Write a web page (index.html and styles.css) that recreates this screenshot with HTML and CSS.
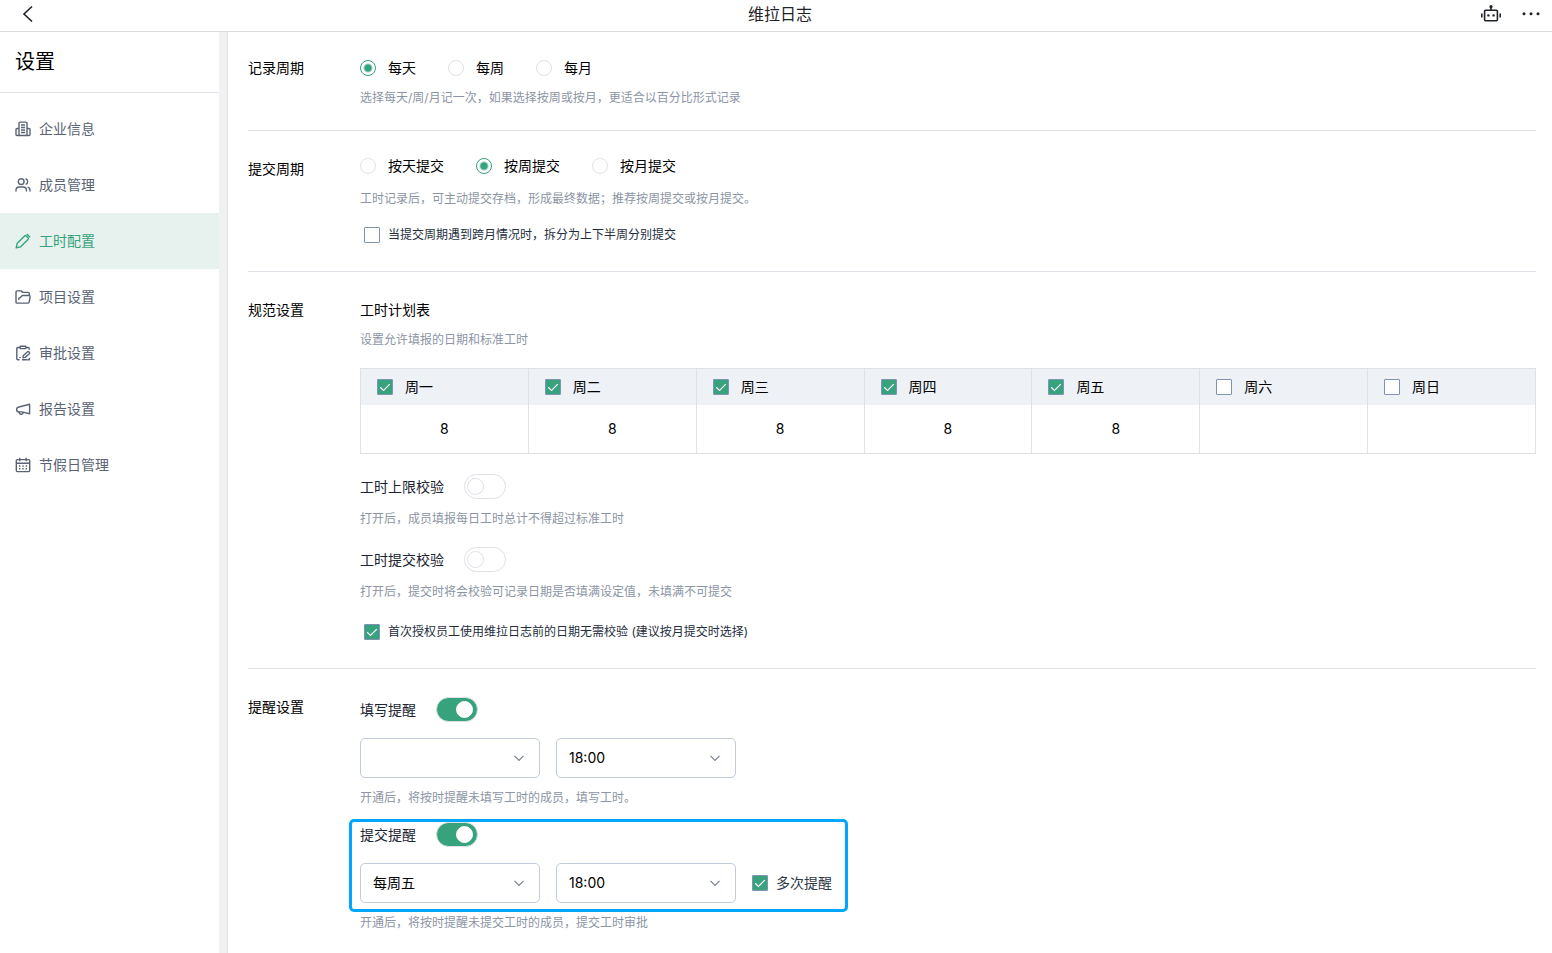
FILE: index.html
```html
<!DOCTYPE html>
<html lang="zh-CN">
<head>
    <meta charset="UTF-8">
    <meta name="viewport" content="width=device-width, initial-scale=1.0">
    <title>维拉日志</title>
    <link rel="stylesheet" href="styles.css">
</head>
<body>
    <header class="topbar">
        <button type="button" class="icon-button" aria-label="返回">
            <svg width="16" height="18" viewBox="0 0 16 18" fill="none" stroke="currentColor" stroke-width="1.6"><path d="M12 1.5 4 9l8 7.5"/></svg>
        </button>
        <h1>维拉日志</h1>
        <div class="topbar-actions">
            <button type="button" class="icon-button" aria-label="机器人">
                <svg width="22" height="18" viewBox="0 0 22 18" fill="none" stroke="currentColor" stroke-width="1.6">
                    <rect x="4.6" y="5.2" width="12.8" height="10.6" rx="1"/>
                    <path d="M11 2v3M1.8 8.5v4M20.2 8.5v4"/>
                    <circle cx="11" cy="1.7" r="1.6" fill="currentColor" stroke="none"/>
                    <circle cx="8.4" cy="10.4" r="1.2" fill="currentColor" stroke="none"/>
                    <circle cx="13.6" cy="10.4" r="1.2" fill="currentColor" stroke="none"/>
                </svg>
            </button>
            <button type="button" class="icon-button" aria-label="更多">
                <svg width="18" height="18" viewBox="0 0 18 18" fill="currentColor"><circle cx="2" cy="8.8" r="1.5"/><circle cx="9" cy="8.8" r="1.5"/><circle cx="16" cy="8.8" r="1.5"/></svg>
            </button>
        </div>
    </header>

    <div class="layout">
        <aside class="sidebar">
            <h2>设置</h2>
            <nav>
                <a href="#company">
                    <svg class="icon" viewBox="0 0 16 16"><path d="M4 14.5V2.1c0-.6.4-1 1-1h6c.6 0 1 .4 1 1v12.4M4 7.5H2c-.6 0-1 .4-1 1v5c0 .6.4 1 1 1h12c.6 0 1-.4 1-1v-5c0-.6-.4-1-1-1h-2M6 4h4M6 6.5h4M6 9h4M6 11.5h4"/></svg>
                    企业信息
                </a>
                <a href="#members">
                    <svg class="icon" viewBox="0 0 16 16"><circle cx="6.2" cy="4.6" r="2.9"/><path d="M1 14.6v-1.4c0-2 1.4-3.2 3.2-3.2h4c1.8 0 3.2 1.2 3.2 3.2v1.4M10.6 1.8c1.2.3 2.1 1.4 2.1 2.8s-.9 2.5-2.1 2.8M12.6 10.2c1.4.4 2.4 1.5 2.4 3v1.4"/></svg>
                    成员管理
                </a>
                <a href="#hours" class="active">
                    <svg class="icon" viewBox="0 0 16 16"><path d="M1.2 14.8l.9-4.2L9.6 3c.5-.5 1.1-.5 1.6 0l1.8 1.8c.5.5.5 1.1 0 1.6l-7.6 7.5zM11.8.9l3.3 3.3"/></svg>
                    工时配置
                </a>
                <a href="#projects">
                    <svg class="icon" viewBox="0 0 16 16"><path d="M14.2 6V4.4c0-.6-.4-1-1-1H7.8L6 1.9H2c-.6 0-1 .4-1 1v10.3c0 .5.4.9 1 .9h11.1c.6 0 1-.3 1.1-.9l.9-5.4c.1-.8-.3-1.3-1-1.3H7.3L5 8.7c-.6 0-1 .2-1.1.8l-.3 1.3"/></svg>
                    项目设置
                </a>
                <a href="#approval">
                    <svg class="icon" viewBox="0 0 16 16"><path d="M5 2.5H2.8c-.6 0-1 .4-1 1v10.2c0 .6.4 1 1 1h1.8M11 2.5h2.2c.6 0 1 .4 1 1v1.2M5.2 1.2h5.6v2.4H5.2zM8 12.7l.4-2.2 4.1-3.7c.4-.4.9-.4 1.3 0l.6.7c.4.4.3.9-.1 1.3l-4.1 3.6zM7 14.7h5.8M13 14.7h1.4v-2M5 12v1"/></svg>
                    审批设置
                </a>
                <a href="#reports">
                    <svg class="icon" viewBox="0 0 16 16"><path d="M14.6 3.2v9.6L7 10.9H4.4C2.6 10.9 1.6 9.8 1.6 8.4c0-1.2.9-2.1 2.4-2.4zM4 11c.2 1.5 1 2.3 2.2 2.3S8.2 12.5 8 11.2"/></svg>
                    报告设置
                </a>
                <a href="#holidays">
                    <svg class="icon" viewBox="0 0 16 16"><rect x="1.3" y="2.6" width="13.4" height="12" rx="1"/><path d="M1.3 6.2h13.4M4.8.8v3.4M11.2.8v3.4"/><path d="M4 9h1.4M7.3 9h1.4M10.6 9H12M4 11.8h1.4M7.3 11.8h1.4M10.6 11.8H12"/></svg>
                    节假日管理
                </a>
            </nav>
        </aside>

        <main class="content">
            <section class="setting setting-record">
                <h3>记录周期</h3>
                <div class="setting-body">
                    <div class="radio-group">
                        <label><input type="radio" name="record" checked>每天</label>
                        <label><input type="radio" name="record">每周</label>
                        <label><input type="radio" name="record">每月</label>
                    </div>
                    <p class="hint">选择每天/周/月记一次，如果选择按周或按月，更适合以百分比形式记录</p>
                </div>
            </section>

            <section class="setting setting-submit">
                <h3>提交周期</h3>
                <div class="setting-body">
                    <div class="radio-group">
                        <label><input type="radio" name="submit">按天提交</label>
                        <label><input type="radio" name="submit" checked>按周提交</label>
                        <label><input type="radio" name="submit">按月提交</label>
                    </div>
                    <p class="hint">工时记录后，可主动提交存档，形成最终数据；推荐按周提交或按月提交。</p>
                    <label class="check-row"><input type="checkbox">当提交周期遇到跨月情况时，拆分为上下半周分别提交</label>
                </div>
            </section>

            <section class="setting setting-rules">
                <h3>规范设置</h3>
                <div class="setting-body">
                    <h4>工时计划表</h4>
                    <p class="hint">设置允许填报的日期和标准工时</p>
                    <table class="plan">
                        <thead>
                            <tr>
                                <th><label><input type="checkbox" checked>周一</label></th>
                                <th><label><input type="checkbox" checked>周二</label></th>
                                <th><label><input type="checkbox" checked>周三</label></th>
                                <th><label><input type="checkbox" checked>周四</label></th>
                                <th><label><input type="checkbox" checked>周五</label></th>
                                <th><label><input type="checkbox">周六</label></th>
                                <th><label><input type="checkbox">周日</label></th>
                            </tr>
                        </thead>
                        <tbody>
                            <tr>
                                <td>8</td>
                                <td>8</td>
                                <td>8</td>
                                <td>8</td>
                                <td>8</td>
                                <td></td>
                                <td></td>
                            </tr>
                        </tbody>
                    </table>
                    <label class="switch-row">工时上限校验<input type="checkbox" class="switch"></label>
                    <p class="hint">打开后，成员填报每日工时总计不得超过标准工时</p>
                    <label class="switch-row">工时提交校验<input type="checkbox" class="switch"></label>
                    <p class="hint">打开后，提交时将会校验可记录日期是否填满设定值，未填满不可提交</p>
                    <label class="check-row"><input type="checkbox" checked>首次授权员工使用维拉日志前的日期无需校验 (建议按月提交时选择)</label>
                </div>
            </section>

            <section class="setting setting-remind">
                <h3>提醒设置</h3>
                <div class="setting-body">
                    <div class="reminder">
                        <label class="switch-row">填写提醒<input type="checkbox" class="switch" checked></label>
                        <div class="fields">
                            <select aria-label="填写提醒日期"><option></option><option>每天</option></select>
                            <select aria-label="填写提醒时间"><option>18:00</option></select>
                        </div>
                    </div>
                    <p class="hint">开通后，将按时提醒未填写工时的成员，填写工时。</p>
                    <div class="reminder highlighted">
                        <label class="switch-row">提交提醒<input type="checkbox" class="switch" checked></label>
                        <div class="fields">
                            <select aria-label="提交提醒日期"><option>每周五</option></select>
                            <select aria-label="提交提醒时间"><option>18:00</option></select>
                            <label class="repeat"><input type="checkbox" checked>多次提醒</label>
                        </div>
                    </div>
                    <p class="hint">开通后，将按时提醒未提交工时的成员，提交工时审批</p>
                </div>
            </section>
        </main>
    </div>
</body>
</html>
```
FILE: styles.css
```css
*,
*::before,
*::after {
    box-sizing: border-box;
}
body {
    margin: 0;
    min-height: 100vh;
    display: flex;
    flex-direction: column;
    font-family: Inter, "Noto Sans CJK SC", sans-serif;
    font-size: 14px;
    line-height: 20px;
    color: #000;
    background: #fff;
}
h1, h2, h3, h4, p {
    margin: 0;
    font-weight: 400;
}

/* top bar */
.topbar {
    display: grid;
    grid-template-columns: 1fr auto 1fr;
    align-items: center;
    height: 32px;
    padding: 0 12px 4px 20px;
    border-bottom: 1px solid #d8dadd;
    color: #1f2329;
}
.topbar h1 {
    font-size: 16px;
}
.icon-button {
    display: flex;
    padding: 0;
    border: none;
    background: none;
    color: inherit;
    cursor: pointer;
}
.topbar-actions {
    display: flex;
    justify-content: flex-end;
    gap: 20px;
}

/* sidebar */
.layout {
    display: flex;
    flex: 1;
}
.sidebar {
    flex: none;
    width: 219px;
}
.sidebar h2 {
    padding: 15px;
    font-size: 20px;
    line-height: 30px;
    border-bottom: 1px solid #dfe1e6;
}
.sidebar nav {
    padding-top: 8px;
}
.sidebar a {
    display: flex;
    align-items: center;
    gap: 8px;
    height: 56px;
    padding: 0 15px;
    color: #596375;
    text-decoration: none;
}
.sidebar a.active {
    color: #36a37c;
    background: #e7f1ee;
}
.icon {
    width: 16px;
    height: 16px;
    fill: none;
    stroke: currentColor;
    stroke-width: 1.4;
    stroke-linejoin: round;
}

/* content */
.content {
    flex: 1;
    min-width: 0;
    padding: 0 16px 0 20px;
    border-left: 1px solid #dfe1e6;
    box-shadow: -8px 0 0 #f0f1f3;
    margin-left: 8px;
}
.setting {
    display: flex;
    padding: 24px 0 26px;
    border-bottom: 1px solid #dfe1e6;
}
.setting:last-child {
    border-bottom: none;
    padding-bottom: 20px;
}
.setting h3 {
    flex: none;
    width: 112px;
    padding-top: 4px;
    font-size: 14px;
}
.setting-body {
    flex: 1;
    min-width: 0;
}
.setting-body h4 {
    font-size: 14px;
    line-height: 28px;
}
.hint {
    margin-top: 10px;
    font-size: 12px;
    color: #8c95a5;
}
.setting-record {
    padding: 22px 0;
}
.setting-record .radio-group {
    height: 28px;
}
.setting-record .hint,
h4 + .hint {
    margin-top: 6px;
}
.setting-submit .hint {
    margin-top: 12px;
}

/* form controls */
.radio-group {
    display: flex;
    gap: 32px;
    height: 22px;
}
.radio-group label {
    display: flex;
    align-items: center;
    gap: 12px;
}
input[type="radio"],
input[type="checkbox"] {
    appearance: none;
    flex: none;
    width: 16px;
    height: 16px;
    margin: 0;
    background: #fff center / 100% no-repeat;
}
input[type="radio"] {
    border: 1px solid #dfe1e6;
    border-radius: 50%;
}
input[type="radio"]:checked {
    border-color: #36a37c;
    background: radial-gradient(circle, #36a37c 3px, #fff 5px);
}
input[type="checkbox"] {
    border: 1px solid #8093b3;
    border-radius: 1px;
}
input[type="checkbox"]:checked {
    background-color: #36a37c;
    background-image: url("data:image/svg+xml,%3Csvg xmlns='http://www.w3.org/2000/svg' viewBox='0 0 14 14' fill='none' stroke='white' stroke-width='1.2'%3E%3Cpath d='M2.2 7.2l3.3 3.2 6.3-6.3'/%3E%3C/svg%3E");
}
.check-row {
    display: flex;
    align-items: center;
    gap: 8px;
    width: fit-content;
    margin-top: 16px;
    padding-left: 4px;
    font-size: 12px;
    color: #242d3d;
}
.setting-rules .check-row {
    margin-top: 20px;
}
.switch-row {
    display: flex;
    align-items: center;
    gap: 20px;
    width: fit-content;
    height: 25px;
    color: #1b2433;
}
.setting-rules .switch-row {
    margin-top: 18px;
}
.setting-rules .plan + .switch-row {
    margin-top: 20px;
}
input[type="checkbox"].switch {
    display: flex;
    align-items: center;
    width: 42px;
    height: 25px;
    padding: 0 2px;
    border: 1px solid #dfe1e6;
    border-radius: 13px;
    background: #fff;
}
.switch::before {
    content: "";
    width: 17px;
    height: 17px;
    border: 1px solid #dfe1e6;
    border-radius: 50%;
    background: #fff;
}
input[type="checkbox"].switch:checked {
    justify-content: flex-end;
    padding-right: 4px;
    background: #36a37c;
}
.switch:checked::before {
    border-color: #fff;
}

/* weekly plan */
.plan {
    width: 100%;
    margin-top: 18px;
    table-layout: fixed;
    border-spacing: 0;
    border: 1px solid #dfe1e6;
    border-left: none;
}
.plan th,
.plan td {
    border-left: 1px solid #dfe1e6;
    font-weight: 400;
}
.plan th {
    height: 36px;
    padding: 0 16px;
    background: #eef1f6;
}
.plan td {
    height: 48px;
    padding: 0;
    text-align: center;
}
.plan label {
    display: flex;
    align-items: center;
    gap: 12px;
}

/* reminders */
.setting-remind .reminder:first-child {
    margin-top: 4px;
}
.reminder {
    width: fit-content;
    margin-top: 14px;
}
.fields {
    display: flex;
    align-items: center;
    gap: 16px;
    margin-top: 16px;
}
select {
    appearance: none;
    width: 180px;
    height: 40px;
    padding: 0 32px 0 12px;
    border: 1px solid #c0ccda;
    border-radius: 5px;
    font: inherit;
    color: #000;
    background: #fff url("data:image/svg+xml,%3Csvg xmlns='http://www.w3.org/2000/svg' width='12' height='12' viewBox='0 0 12 12' fill='none' stroke='%23777f8c' stroke-width='1.2'%3E%3Cpath d='M1.5 3.8L6 8.3l4.5-4.5'/%3E%3C/svg%3E") right 14px center no-repeat;
}
.repeat {
    display: flex;
    align-items: center;
    gap: 8px;
    color: #2f3949;
}
.highlighted {
    position: relative;
}
.highlighted::after {
    content: "";
    position: absolute;
    inset: -3px -16px -9px -11px;
    border: 3px solid #00a6ff;
    border-radius: 5px;
    pointer-events: none;
}
```
